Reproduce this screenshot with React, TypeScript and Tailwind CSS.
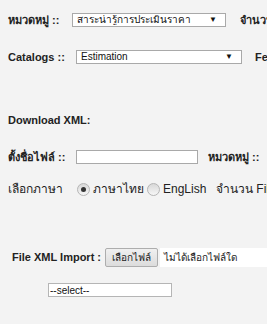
const font = 'font-["Liberation_Sans",Arial,"Noto_Sans",sans-serif]';

function FakeSelect({ value, width }: { value: string; width: string }) {
  return (
    <div
      className={`${width} h-[14px] flex items-center justify-between bg-white border border-[#a9a9a9] pl-[4px] pr-[8px] text-[10px] leading-none text-[#111] shrink-0`}
    >
      <span className="truncate">{value}</span>
      <span className="text-[8px] leading-none">▼</span>
    </div>
  );
}

function Radio({ checked }: { checked?: boolean }) {
  return (
    <span className="w-[13px] h-[13px] rounded-full border border-[#b5b5b5] bg-gradient-to-b from-[#d8d8d8] to-[#f6f6f6] flex items-center justify-center shrink-0">
      {checked && <span className="w-[5px] h-[5px] rounded-full bg-[#333]" />}
    </span>
  );
}

export default function App() {
  return (
    <div className={`w-[267px] h-[324px] overflow-hidden bg-[#f3f3f3] text-[#222] whitespace-nowrap ${font}`}>
      {/* category */}
      <div className="mt-[13px] h-[14px] pl-[8px] flex items-center">
        <span className="w-[64px] shrink-0 text-[11px] font-bold">หมวดหมู่ ::</span>
        <FakeSelect value="สาระน่ารู้การประเมินราคา" width="w-[154px]" />
        <span className="ml-[14px] shrink-0 text-[11px] font-bold">จำนวนแสดง ::</span>
      </div>

      {/* catalogs */}
      <div className="mt-[23px] h-[14px] pl-[8px] flex items-center">
        <span className="w-[68px] shrink-0 text-[11px] font-bold">Catalogs ::</span>
        <FakeSelect value="Estimation" width="w-[166px]" />
        <span className="ml-[13px] shrink-0 text-[11px] font-bold">Featured ::</span>
      </div>

      <div className="mt-[49px] h-[14px] pl-[8px] flex items-center text-[11px] font-bold">
        Download XML:
      </div>

      {/* file name */}
      <div className="mt-[23px] h-[14px] pl-[8px] flex items-center">
        <span className="w-[68px] shrink-0 text-[11px] font-bold">ตั้งชื่อไฟล์ ::</span>
        <div className="w-[122px] h-[14px] bg-white border border-[#a9a9a9] shrink-0" />
        <span className="ml-[10px] shrink-0 text-[11px] font-bold">หมวดหมู่ ::</span>
      </div>

      {/* language */}
      <div className="mt-[18px] h-[14px] pl-[8px] flex items-center text-[12px]">
        <span className="w-[69px] shrink-0">เลือกภาษา</span>
        <Radio checked />
        <span className="ml-[3px] w-[54px] shrink-0">ภาษาไทย</span>
        <Radio />
        <span className="ml-[3px] w-[53px] shrink-0">EngLish</span>
        <span className="shrink-0">จำนวน File ::</span>
      </div>

      {/* import */}
      <div className="mt-[52px] h-[19px] pl-[12px] flex items-center">
        <span className="w-[93px] shrink-0 text-[11px] font-bold">File XML Import :</span>
        <button className="w-[53px] h-[19px] border border-[#adadad] rounded-[2px] bg-gradient-to-b from-[#f0f0f0] to-[#dcdcdc] text-[10px] text-[#222] shrink-0">
          เลือกไฟล์
        </button>
        <div className="ml-[2px] h-[19px] flex-1 bg-white flex items-center pl-[4px] text-[10px]">
          ไม่ได้เลือกไฟล์ใด
        </div>
      </div>

      <div className="mt-[16px] pl-[48px]">
        <div className="w-[124px] h-[14px] bg-white border border-[#b5b5b5] pl-[1px] flex items-center text-[10px] text-[#111]">
          --select--
        </div>
      </div>
    </div>
  );
}
